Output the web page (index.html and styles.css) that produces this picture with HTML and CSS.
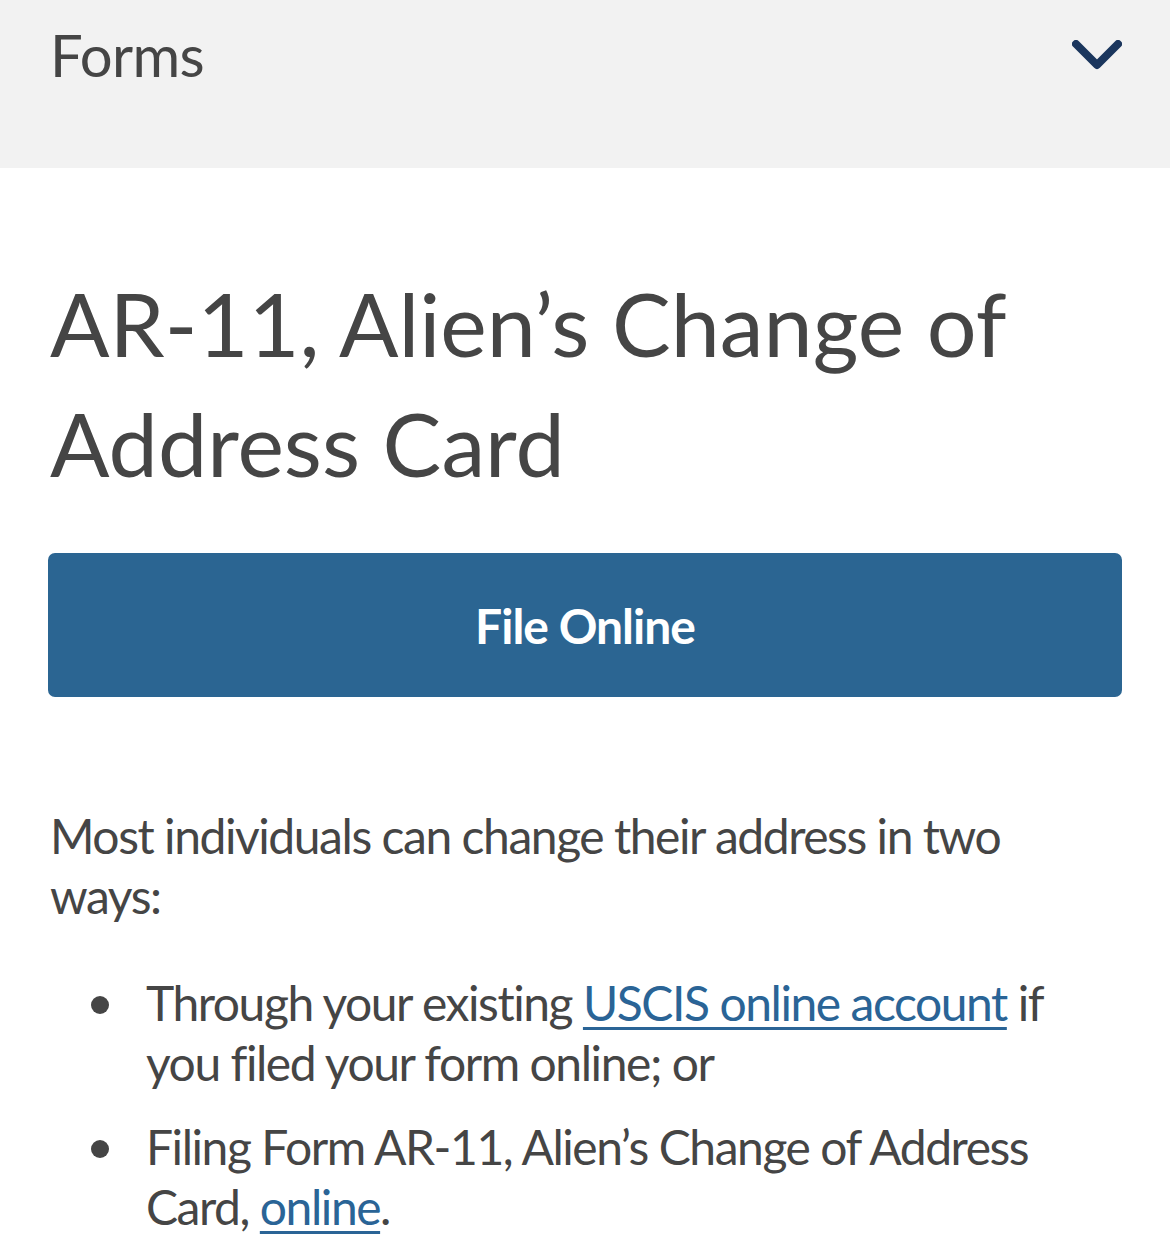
FILE: index.html
```html
<!doctype html>
<html lang="en">

<head>
  <meta charset="utf-8">
  <title>AR-11, Alien’s Change of Address Card</title>
  <link rel="stylesheet" href="styles.css">
</head>

<body>
  <header class="section-bar">
    <span class="section-name">Forms</span>
    <svg class="chevron" width="50" height="32" viewBox="0 0 50 32" aria-hidden="true">
      <path d="M4 4 L25 25 L46 4" fill="none" stroke="#1b365d" stroke-width="8" stroke-linecap="round" stroke-linejoin="round"/>
    </svg>
  </header>

  <main class="page">
    <h1 class="page-title">AR-11, Alien’s Change of Address Card</h1>

    <a class="btn-primary" href="#">File Online</a>

    <p class="body-text">Most individuals can change their address in two ways:</p>

    <ul class="body-list">
      <li>Through your existing <a href="#">USCIS online account</a> if you filed your form online; or</li>
      <li>Filing Form AR-11, Alien’s Change of Address Card, <a href="#">online</a>.</li>
    </ul>
  </main>
</body>

</html>
```

FILE: styles.css
```css
html { background-color:#fff; }
body { margin:0; font-family:Lato,"Open Sans",sans-serif; color:#454545; }

.section-bar { display:flex; justify-content:space-between; align-items:flex-start; height:168px; box-sizing:border-box; padding:25px 48px 0 50px; background-color:#f2f2f2; }
.section-name { font-size:58px; line-height:60px; letter-spacing:-0.6px; }
.chevron { display:block; margin-top:15px; }

.page { padding:0 48px; }
.page-title { margin:95px 0 0 2px; font-size:88px; line-height:120px; font-weight:400; letter-spacing:0; }

.btn-primary { display:flex; justify-content:center; align-items:center; height:144px; margin-top:50px; border-radius:7px; background-color:#2b6592; color:#fff; font-size:48px; font-weight:700; letter-spacing:-1px; text-decoration:none; }

.body-text { max-width:1040px; margin:109px 0 0 2px; font-size:48px; line-height:60px; letter-spacing:-1.45px; }

.body-list { margin:47px 0 0; padding:0 0 0 98px; list-style:none; font-size:48px; line-height:60px; letter-spacing:-1.45px; }
.body-list li { position:relative; margin-bottom:24px; }
.body-list li::before { content:""; position:absolute; left:-55px; top:23px; width:18px; height:18px; border-radius:50%; background-color:#454545; }

a { color:#2a6496; text-decoration-thickness:3px; text-underline-offset:6px; }
```
